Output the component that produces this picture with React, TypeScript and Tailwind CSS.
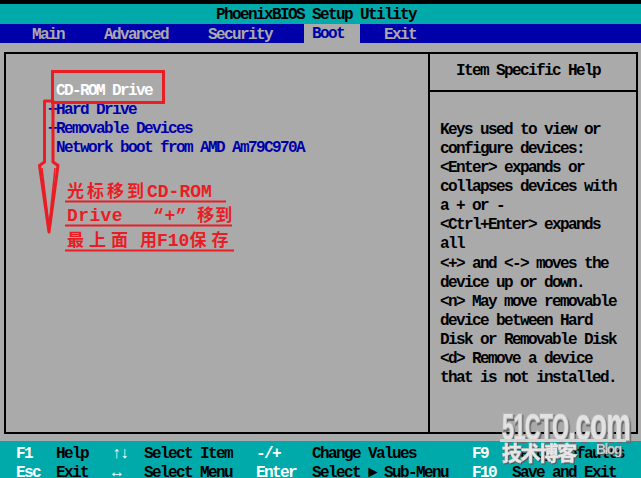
import React from 'react';

const entries = [
  { prefix: ' ', label: 'CD-ROM Drive', selected: true },
  { prefix: '+', label: 'Hard Drive', selected: false },
  { prefix: '+', label: 'Removable Devices', selected: false },
  { prefix: ' ', label: 'Network boot from AMD Am79C970A', selected: false },
];

const helpLines = [
  'Keys used to view or',
  'configure devices:',
  '<Enter> expands or',
  'collapses devices with',
  'a + or -',
  '<Ctrl+Enter> expands',
  'all',
  '<+> and <-> moves the',
  'device up or down.',
  '<n> May move removable',
  'device between Hard',
  'Disk or Removable Disk',
  '<d> Remove a device',
  'that is not installed.',
];

const footerRows = [
  ['F1', 'Help', '↑↓', 'Select Item', '-/+', 'Change Values', 'F9', 'Setup Defaults'],
  ['Esc', 'Exit', '↔', 'Select Menu', 'Enter', 'Select ► Sub-Menu', 'F10', 'Save and Exit'],
];

// red hand-drawn markup on top of the screenshot
const Annotation: React.FC = () => (
  <>
    <svg className="absolute left-0 top-0 pointer-events-none" width="641" height="478">
      <rect x="52.5" y="71.5" width="111" height="31" fill="none" stroke="#ea1c24" strokeWidth="3" />
      <path
        d="M44.5 101 L44.5 162 L39.5 165.5 L49 232 L58 165.5 L53 162 L53 101 Z"
        fill="none"
        stroke="#ea1c24"
        strokeWidth="3"
        strokeLinejoin="round"
      />
      <path d="M42 168 L49 226 L55 168" fill="none" stroke="#ea1c24" strokeWidth="1.5" />
      <line x1="65" y1="201.5" x2="226" y2="201.5" stroke="#ea1c24" strokeWidth="2" />
      <line x1="65" y1="225.5" x2="232" y2="225.5" stroke="#ea1c24" strokeWidth="2" />
      <line x1="65" y1="250.5" x2="234" y2="250.5" stroke="#ea1c24" strokeWidth="2" />
    </svg>
    <div className="absolute left-[67px] top-[184px] flex items-baseline whitespace-pre leading-[17px] font-bold text-[#ea1c24] font-['Liberation_Mono','Noto_Sans_CJK_SC',monospace]">
      <span className="text-[17px] tracking-[3px]">光标移到</span>
      <span className="text-[18px] tracking-[0px]">CD-ROM</span>
    </div>
    <div className="absolute left-[67px] top-[208px] flex items-baseline whitespace-pre leading-[17px] font-bold text-[#ea1c24] font-['Liberation_Mono','Noto_Sans_CJK_SC',monospace]">
      <span className="text-[18px] tracking-[0.4px]">Drive</span>
      <span className="ml-[30px] text-[18px] tracking-[0.6px]">“+”</span>
      <span className="ml-[10px] text-[17px] tracking-[1px]">移到</span>
    </div>
    <div className="absolute left-[67px] top-[233px] flex items-baseline whitespace-pre leading-[17px] font-bold text-[#ea1c24] font-['Liberation_Mono','Noto_Sans_CJK_SC',monospace]">
      <span className="text-[17px] tracking-[5px]">最上面</span>
      <span className="ml-[7px] text-[17px] tracking-[0px]">用</span>
      <span className="text-[18px] tracking-[0px]">F10</span>
      <span className="text-[17px] tracking-[5px]">保存</span>
    </div>
  </>
);

const Watermark: React.FC = () => (
  <>
    <div className="absolute left-[502px] top-[401px] origin-left scale-x-[0.6] whitespace-nowrap font-bold leading-none tracking-[-1px] text-[#e2e2e2] [-webkit-text-stroke:2.5px_#b4b4b4] [paint-order:stroke_fill] font-['Liberation_Sans',sans-serif] drop-shadow-[2px_2px_0_#6a6a6a]">
      <span className="text-[36px]">51CTO</span>
      <span className="text-[46px]">.com</span>
    </div>
    <div className="absolute left-[500px] top-[439px] w-[126px] h-[3px] bg-[#d4d4d4]" />
    <div className="absolute left-[502px] top-[442px] text-[20px] leading-[22px] font-bold text-[#e6e6e6] [-webkit-text-stroke:1px_#bdbdbd] [paint-order:stroke_fill] font-['Noto_Sans_CJK_SC',sans-serif] drop-shadow-[1px_1px_0_#555555]">
      技术博客
    </div>
    <div className="absolute left-[596px] top-[441px] text-[14px] leading-[16px] font-bold text-[#cccccc] font-['Liberation_Sans',sans-serif] drop-shadow-[1px_1px_0_#555555]">
      Blog
    </div>
  </>
);

export default function App() {
  return (
    <div className="relative w-[641px] h-[478px] overflow-hidden bg-black pt-[4px] font-bold text-[16px] leading-[19px] tracking-[-1.6px] whitespace-pre font-['Liberation_Mono','Noto_Sans_CJK_SC',monospace]">
      {/* title */}
      <div className="h-[20px] bg-[#00aaaa] pt-[2px] pl-[216px] leading-[18px] text-black">PhoenixBIOS Setup Utility</div>

      {/* menu bar */}
      <div className="h-[19px] bg-[#0000aa] flex leading-[19px] text-[#aaaaaa]">
        <div className="w-[32px]" />
        <div className="w-[72px] pt-[2px]">Main</div>
        <div className="w-[104px] pt-[2px]">Advanced</div>
        <div className="w-[96px] pt-[2px]">Security</div>
        <div className="w-[56px] pt-[2px] pl-[8px] bg-[#aaaaaa] text-[#0000aa] leading-[17px]">Boot</div>
        <div className="w-[24px]" />
        <div className="pt-[2px]">Exit</div>
      </div>

      {/* body */}
      <div className="h-[398px] bg-[#aaaaaa] pt-[9px] pl-[4px]">
        <div className="w-[634px] h-[382px] border-2 border-black flex">
          <div className="w-[422px] pt-[28px] pl-[42px]">
            {entries.map((e) => (
              <div key={e.label} className="h-[19px] text-[#0000aa]">
                {e.prefix}
                <span className={e.selected ? 'text-white' : ''}>{e.label}</span>
              </div>
            ))}
          </div>
          <div className="flex-1 border-l-2 border-black flex flex-col">
            <div className="h-[38px] border-b-2 border-black pt-[8px] pl-[26px] text-black">Item Specific Help</div>
            <div className="pt-[29px] pl-[10px] text-black leading-[19.08px]">
              {helpLines.map((l) => (
                <div key={l}>{l}</div>
              ))}
            </div>
          </div>
        </div>
      </div>

      {/* key legend */}
      <div className="h-[37px] bg-[#00aaaa] pt-[4px]">
        {footerRows.map((row, i) => (
          <div key={i} className="h-[19px] grid grid-cols-[16px_40px_56px_32px_112px_56px_160px_40px_1fr]">
            <div />
            {row.map((cell, j) => (
              <div key={j} className={j % 2 === 0 ? 'text-white' : 'text-black'}>
                {cell}
              </div>
            ))}
          </div>
        ))}
      </div>

      <Annotation />
      <Watermark />
    </div>
  );
}
